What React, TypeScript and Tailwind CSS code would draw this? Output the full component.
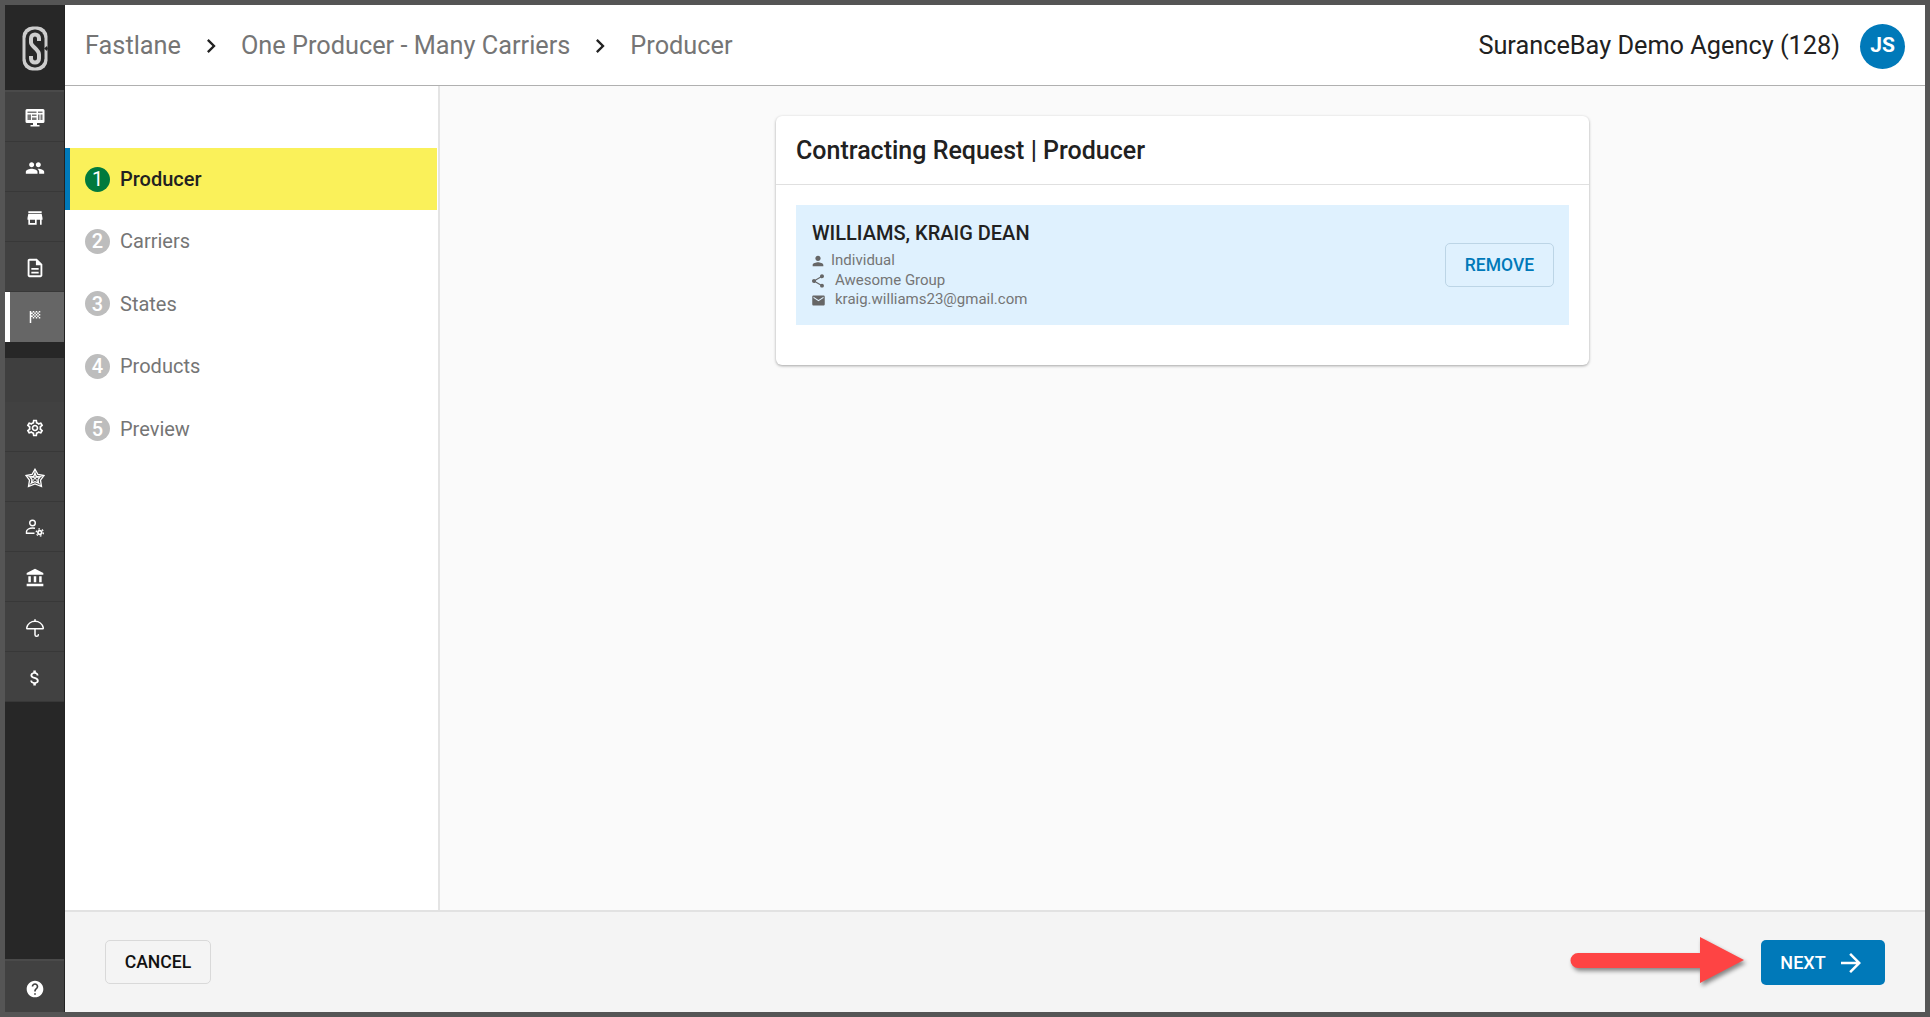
import React from "react";
import { Umbrella } from "lucide-react";
import {
  MdAccountBalance,
  MdArrowForward,
  MdAttachMoney,
  MdChevronRight,
  MdEmail,
  MdHelp,
  MdOutlineDescription,
  MdOutlineSettings,
  MdOutlineSportsScore,
  MdPeople,
  MdPerson,
  MdShare,
  MdStore,
} from "react-icons/md";

const Logo = () => (
  <svg width="26" height="45" viewBox="0 0 26 45">
    <rect x="0.500" y="0.500" width="25" height="44" rx="10" fill="#cdcdcd" />
    <path d="M25 20l-3 2.500 3 2.500 1-2.500z" fill="#272727" />
    <rect x="3.500" y="3.500" width="19" height="38" rx="9" fill="#272727" />
    <path
      d="M17 15v-2.500c0-2.500-1.700-4-4-4s-4 1.500-4 4v4c0 4 8 7 8 12v4c0 2.500-1.700 4-4 4s-4-1.500-4-4V30"
      fill="none"
      stroke="#cdcdcd"
      strokeWidth="4"
    />
  </svg>
);

const Monitor = () => (
  <svg width="20" height="20" viewBox="0 0 20 20" fill="#fff">
    <path d="M2 1h16a1.500 1.500 0 0 1 1.500 1.500v11A1.500 1.500 0 0 1 18 15h-6v2h2.500v1.500h-9V17H8v-2H2A1.500 1.500 0 0 1 .500 13.500v-11A1.500 1.500 0 0 1 2 1z" />
    <path
      fill="#777"
      d="M2.500 3.500h9v1.500h-9zM13 3.500h4.500v1.500H13zM2.500 6.500h3.500v5.500H2.500zM7 6.500h4.500V8H7zM7 9.500h4.500V12H7zM13 6.500h1.500V12H13zM15.500 6.500h2V12h-2z"
    />
  </svg>
);

const WebStar = () => (
  <svg width="20" height="20" viewBox="0 0 20 20" fill="none" stroke="#fff" strokeWidth="1.300">
    <path d="M10 1.200l3 5.300 6 1-3.500 4.700 1 6.300-6.500-2.500-6.500 2.500 1-6.300L1 7.500l6-1z" />
    <path d="M10 5.500l1.500 3 3.500.5-2 2.700.5 3.300-3.500-1.300-3.500 1.300.5-3.300-2-2.700 3.500-.5z" />
    <path d="M10 1.200V10M19 7.500L10 10M1 7.500L10 10M16.500 18.500L10 10M3.500 18.500L10 10" strokeWidth="0.900" />
  </svg>
);

const PersonGear = () => (
  <svg width="20" height="20" viewBox="0 0 20 20" fill="none" stroke="#fff" strokeWidth="1.400">
    <circle cx="7.500" cy="5" r="2.800" />
    <path d="M10 10.300C9 10.100 8.200 10 7.500 10 4.500 10 1.500 11.500 1.500 13.500v1.800h8" />
    <circle cx="14.800" cy="14.500" r="2.700" fill="#fff" stroke="none" />
    <circle cx="14.800" cy="14.500" r="3.600" strokeWidth="1.300" strokeDasharray="1.700 2.050" />
    <circle cx="14.800" cy="14.500" r="1" fill="#414141" stroke="none" />
  </svg>
);

const nav1 = [
  <Monitor />,
  <MdPeople size={20} color="#fff" />,
  <MdStore size={20} color="#fff" />,
  <MdOutlineDescription size={22} color="#fff" />,
];

const nav2 = [
  <MdOutlineSettings size={20} color="#fff" />,
  <WebStar />,
  <PersonGear />,
  <MdAccountBalance size={20} color="#fff" />,
  <Umbrella size={20} color="#fff" strokeWidth={1.800} />,
  <MdAttachMoney size={20} color="#fff" />,
];

const steps = ["Producer", "Carriers", "States", "Products", "Preview"];

const App = () => {
  return (
    <div
      className="w-[1930px] h-[1017px] bg-[#555555] p-[5px] overflow-hidden flex"
      style={{ fontFamily: "Roboto, sans-serif" }}
    >
      <aside className="w-[60px] shrink-0 bg-[#272727] flex flex-col border-r border-[#222]">
        <div className="h-[85px] flex items-center justify-center pt-px">
          <Logo />
        </div>
        <div className="h-[2px] bg-[#4a4a4a]" />
        {nav1.map((icon, i) => (
          <div
            key={i}
            className="h-[50px] bg-[#414141] border-b border-[#383838] flex items-center justify-center pt-[3px]"
          >
            {icon}
          </div>
        ))}
        <div className="h-[50px] bg-[#666666] border-l-[5px] border-white pr-[5px] flex items-center justify-center">
          <MdOutlineSportsScore size={18} color="#fff" />
        </div>
        <div className="h-[16px] bg-[#272727]" />
        <div className="h-[44px] bg-[#3f3f3f]" />
        {nav2.map((icon, i) => (
          <div
            key={i}
            className="h-[50px] bg-[#414141] border-b border-[#383838] flex items-center justify-center pt-[2px]"
          >
            {icon}
          </div>
        ))}
        <div className="flex-1" />
        <div className="h-[53px] bg-[#414141] border-t-2 border-[#4a4a4a] flex items-center justify-center pt-1">
          <MdHelp size={20} color="#fff" />
        </div>
      </aside>

      <div className="flex-1 flex flex-col min-w-0">
        <header className="h-[81px] shrink-0 bg-white border-b border-[#b0b0b0] flex items-center pt-[2px] pl-[20px] pr-[20px] text-[25.300px] text-[#757575]">
          <span>Fastlane</span>
          <MdChevronRight size={28} color="#222" className="mx-[16px]" />
          <span>One Producer - Many Carriers</span>
          <MdChevronRight size={28} color="#222" className="mx-[16px]" />
          <span>Producer</span>
          <span className="ml-auto text-[#212121]">SuranceBay Demo Agency (128)</span>
          <div className="ml-[20px] w-[45px] h-[45px] rounded-full bg-[#0079b9] text-white text-[21px] font-bold flex items-center justify-center">
            JS
          </div>
        </header>

        <div className="flex-1 flex min-h-0">
          <nav className="w-[375px] shrink-0 bg-white border-r-2 border-[#e4e4e4] pt-[62px] pr-px">
            {steps.map((s, i) => (
              <div
                key={s}
                className={
                  i === 0
                    ? "h-[62px] flex items-center bg-[#faf15a] border-l-[5px] border-[#0079b9] pl-[15px] text-[#212121] font-medium text-[20px]"
                    : "h-[62.500px] flex items-center border-l-[5px] border-transparent pl-[15px] text-[#757575] text-[20px]"
                }
              >
                <span
                  className={
                    i === 0
                      ? "w-[25px] h-[25px] rounded-full bg-[#007a3d] text-white text-[20px] font-normal flex items-center justify-center mr-[10px]"
                      : "w-[25px] h-[25px] rounded-full bg-[#bdbdbd] text-white text-[20px] font-medium flex items-center justify-center mr-[10px]"
                  }
                >
                  {i + 1}
                </span>
                {s}
              </div>
            ))}
          </nav>

          <main className="flex-1 bg-[#fafafa] pt-[30px] flex justify-center items-start">
            <section className="w-[813px] h-[249px] bg-white rounded-[6px] shadow-[0_1px_3px_rgba(0,0,0,0.35)]">
              <div className="h-[69px] border-b border-[#e0e0e0] flex items-center pt-[2px] px-[20px] text-[25px] font-[480] text-[#212121]">
                Contracting Request | Producer
              </div>
              <div className="mx-[20px] mt-[20px] h-[120px] bg-[#dff1fe] flex items-center justify-between pl-[16px] pr-[15px]">
                <div>
                  <div className="text-[20px] font-[470] text-[#212121] leading-[24px] mt-px mb-[6px]">
                    WILLIAMS, KRAIG DEAN
                  </div>
                  <div className="text-[15px] leading-[19.600px] text-[#757575]">
                    <div className="flex items-center -ml-[2px]">
                      <MdPerson size={16} color="#666" className="mr-[5px]" />
                      Individual
                    </div>
                    <div className="flex items-center -ml-[2px]">
                      <MdShare size={16} color="#666" className="mr-[9px]" />
                      Awesome Group
                    </div>
                    <div className="flex items-center -ml-px">
                      <MdEmail size={15} color="#666" className="mr-[9px]" />
                      kraig.williams23@gmail.com
                    </div>
                  </div>
                </div>
                <button className="w-[109px] h-[44px] pt-px rounded-[5px] border border-[#bcd5e6] text-[#0079b9] font-medium text-[17.500px]">
                  REMOVE
                </button>
              </div>
            </section>
          </main>
        </div>

        <footer className="h-[102px] shrink-0 bg-[#f4f4f4] border-t-2 border-[#e2e2e2] flex items-center px-[40px]">
          <button className="w-[106px] h-[44px] pt-px rounded-[5px] border border-[#d9d9d9] text-[#111] font-medium text-[17.600px]">
            CANCEL
          </button>
          <svg
            width="176"
            height="50"
            viewBox="0 0 176 50"
            className="ml-auto mr-[15px] drop-shadow-[2px_3px_2px_rgba(0,0,0,0.45)]"
          >
            <path d="M8 16h122V0l44 23-44 23V31H8a7.500 7.500 0 0 1 0-15z" fill="#fe4444" />
          </svg>
          <button className="w-[124px] h-[45px] pt-px rounded-[5px] bg-[#0079b9] text-white font-medium text-[18px] flex items-center justify-center">
            NEXT
            <MdArrowForward size={30} color="#fff" className="ml-[10px]" />
          </button>
        </footer>
      </div>
    </div>
  );
};

export default App;
